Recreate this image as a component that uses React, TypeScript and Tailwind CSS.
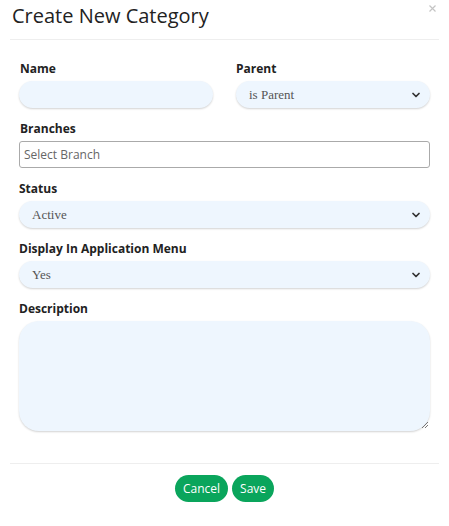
import { ChevronDown } from 'lucide-react';

const pill =
  'h-[27px] w-full rounded-full bg-[#eef6fe] shadow-[0_1px_2px_rgba(0,0,0,0.18)]';

function Label({ children }: { children: React.ReactNode }) {
  return <div className="mb-[4px] text-[12px] font-bold leading-[16px] text-[#222]">{children}</div>;
}

function Select({ value }: { value: string }) {
  return (
    <div className={`${pill} flex items-center justify-between pl-[13px] pr-[8px]`}>
      <span className="font-['Liberation_Serif',serif] text-[13px] text-[#555]">{value}</span>
      <ChevronDown className="h-[12px] w-[12px] text-[#333]" strokeWidth={3.5} />
    </div>
  );
}

export default function App() {
  return (
    <div className="h-[526px] w-[449px] bg-white font-['Open_Sans','Noto_Sans',sans-serif]">
      <div className="mx-[10px] flex h-[40px] items-start justify-between border-b border-[#eeeeee]">
        <h1 className="ml-[2px] mt-[2px] text-[20px] leading-[28px] text-[#222]">Create New Category</h1>
        {/* close */}
        <svg className="mr-[3px] mt-[5px]" width="7" height="7" viewBox="0 0 7 7">
          <path d="M0.5 0.5 L6.5 6.5 M6.5 0.5 L0.5 6.5" stroke="#c4c4c4" strokeWidth="1.2" />
        </svg>
      </div>

      <div className="flex flex-col gap-[13px] px-[19px] pb-[32px] pt-[21px]">
        <div className="grid grid-cols-2 gap-[23px]">
          <div>
            <Label>
              <span className="pl-[1px]">Name</span>
            </Label>
            <div className={pill} />
          </div>
          <div>
            <Label>Parent</Label>
            <Select value="is Parent" />
          </div>
        </div>

        <div>
          <Label>
            <span className="pl-[1px]">Branches</span>
          </Label>
          <div className="flex h-[27px] w-full items-center rounded-[3px] border border-[#aaaaaa] bg-white px-[4px] text-[12px] text-[#666]">
            Select Branch
          </div>
        </div>

        <div>
          <Label>Status</Label>
          <Select value="Active" />
        </div>

        <div>
          <Label>Display In Application Menu</Label>
          <Select value="Yes" />
        </div>

        <div>
          <Label>Description</Label>
          <div className="relative h-[110px] w-full rounded-[20px] bg-[#eef6fe] shadow-[0_1px_2px_rgba(0,0,0,0.18)]">
            <svg className="absolute bottom-[2px] right-[1px]" width="8" height="8" viewBox="0 0 8 8">
              <path d="M7 1 L1 7 M7 4 L4 7" stroke="#777" strokeWidth="1" />
            </svg>
          </div>
        </div>
      </div>

      <div className="mx-[10px] flex justify-center gap-[4px] border-t border-[#eeeeee] pt-[11px]">
        <button className="h-[27px] rounded-full bg-[#0aa55c] px-[8px] text-[12px] text-white">Cancel</button>
        <button className="h-[27px] rounded-full bg-[#0aa55c] px-[8px] text-[12px] text-white">Save</button>
      </div>
    </div>
  );
}
